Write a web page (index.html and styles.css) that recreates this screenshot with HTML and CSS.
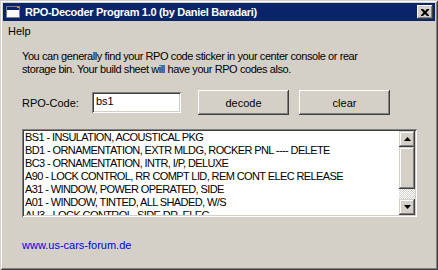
FILE: index.html
```html
<!DOCTYPE html>
<html lang="en">
<head>
    <meta charset="UTF-8">
    <title>RPO-Decoder Program 1.0</title>
    <link rel="stylesheet" href="styles.css">
</head>
<body>
    <div class="window">
        <div class="titlebar">
            <svg class="app-icon" width="16" height="16" viewBox="0 0 16 16">
                <rect x="1.5" y="2.5" width="13" height="11" fill="#fff" stroke="#808080"/>
                <rect x="2" y="3" width="12" height="3" fill="#0a246a"/>
                <rect x="12" y="3" width="2" height="1" fill="#ff8040"/>
            </svg>
            <span class="title">RPO-Decoder Program 1.0 (by Daniel Baradari)</span>
            <div class="close-btn">
                <svg width="8" height="7" viewBox="0 0 8 7">
                    <path d="M0 0h2l2 2 2-2h2v1l-2.5 2.5L8 6v1H6L4 5 2 7H0V6l2.5-2.5L0 1z" fill="#000"/>
                </svg>
            </div>
        </div>
        <div class="menubar">
            <span class="menu-item">Help</span>
        </div>
        <div class="client">
            <p class="intro">You can generally find your RPO code sticker in your center console or rear<br>storage bin. Your build sheet will have your RPO codes also.</p>
            <div class="code-row">
                <span class="code-label">RPO-Code:</span>
                <div class="textbox">bs1</div>
                <div class="btn decode-btn">decode</div>
                <div class="btn">clear</div>
            </div>
            <div class="listbox">
                <div class="list-items">
                    <div class="row">BS1 - INSULATION, ACOUSTICAL PKG</div>
                    <div class="row">BD1 - ORNAMENTATION, EXTR MLDG, ROCKER PNL ---- DELETE</div>
                    <div class="row">BC3 - ORNAMENTATION, INTR, I/P, DELUXE</div>
                    <div class="row">A90 - LOCK CONTROL, RR COMPT LID, REM CONT ELEC RELEASE</div>
                    <div class="row">A31 - WINDOW, POWER OPERATED, SIDE</div>
                    <div class="row">A01 - WINDOW, TINTED, ALL SHADED, W/S</div>
                    <div class="row">AU3 - LOCK CONTROL, SIDE DR, ELEC</div>
                </div>
                <div class="scrollbar">
                    <div class="sb-btn">
                        <svg width="7" height="4" viewBox="0 0 7 4"><path d="M3.5 0L7 4H0z" fill="#000"/></svg>
                    </div>
                    <div class="sb-thumb"></div>
                    <div class="sb-track"></div>
                    <div class="sb-btn">
                        <svg width="7" height="4" viewBox="0 0 7 4"><path d="M0 0h7L3.5 4z" fill="#000"/></svg>
                    </div>
                </div>
            </div>
            <a class="site-link" href="#">www.us-cars-forum.de</a>
        </div>
    </div>
</body>
</html>
```

FILE: styles.css
```css
* {
    margin: 0;
    padding: 0;
    box-sizing: border-box;
}
body {
    font-family: 'Liberation Sans', Arial, sans-serif;
    font-size: 11px;
    color: #000;
    background: #d4d0c8;
}
.window {
    width: 438px;
    height: 270px;
    padding: 3px;
    background: #d4d0c8;
    box-shadow: inset 1px 1px #d4d0c8, inset -1px -1px #404040,
                inset 2px 2px #fff, inset -2px -2px #808080;
    display: flex;
    flex-direction: column;
}

/* title bar */
.titlebar {
    height: 18px;
    background: #0a246a;
    display: flex;
    align-items: center;
    padding-left: 2px;
}
.app-icon {
    flex: none;
}
.title {
    margin-left: 4px;
    color: #fff;
    font-weight: bold;
    letter-spacing: -0.3px;
    flex: 1;
}
.close-btn {
    width: 16px;
    height: 14px;
    margin-right: 2px;
    background: #d4d0c8;
    box-shadow: inset -1px -1px #404040, inset 1px 1px #fff,
                inset -2px -2px #808080;
    display: flex;
    align-items: center;
    justify-content: center;
}

/* menu */
.menubar {
    height: 19px;
    display: flex;
    align-items: center;
    padding-left: 5px;
}

/* client area */
.client {
    flex: 1;
    padding: 10px 0 0 19px;
}
.intro {
    line-height: 13px;
    letter-spacing: -0.42px;
}
.code-row {
    display: flex;
    align-items: center;
    height: 25px;
    margin-top: 14px;
}
.code-label {
    width: 70px;
}
.textbox {
    width: 89px;
    height: 21px;
    background: #fff;
    padding: 3px 0 0 4px;
    box-shadow: inset 1px 1px #808080, inset -1px -1px #fff,
                inset 2px 2px #404040, inset -2px -2px #d4d0c8;
}
.btn {
    width: 91px;
    height: 25px;
    margin-left: 10px;
    display: flex;
    align-items: center;
    justify-content: center;
    box-shadow: inset -1px -1px #404040, inset 1px 1px #fff,
                inset -2px -2px #808080;
}
.decode-btn {
    margin-left: 17px;
}

/* list box */
.listbox {
    width: 395px;
    height: 88px;
    margin-top: 14px;
    padding: 2px;
    background: #fff;
    box-shadow: inset 1px 1px #808080, inset -1px -1px #fff,
                inset 2px 2px #404040, inset -2px -2px #d4d0c8;
    display: flex;
}
.list-items {
    flex: 1;
    overflow: hidden;
    padding-left: 1px;
    letter-spacing: -0.6px;
}
.row {
    height: 13px;
    line-height: 13px;
    white-space: nowrap;
}
.scrollbar {
    width: 16px;
    display: flex;
    flex-direction: column;
}
.sb-btn {
    height: 16px;
    background: #d4d0c8;
    box-shadow: inset -1px -1px #404040, inset 1px 1px #d4d0c8,
                inset -2px -2px #808080, inset 2px 2px #fff;
    display: flex;
    align-items: center;
    justify-content: center;
}
.sb-thumb {
    height: 42px;
    background: #d4d0c8;
    box-shadow: inset -1px -1px #404040, inset 1px 1px #d4d0c8,
                inset -2px -2px #808080, inset 2px 2px #fff;
}
.sb-track {
    flex: 1;
    background: repeating-conic-gradient(#d4d0c8 0 25%, #fff 0 50%) 0 0 / 2px 2px;
}

.site-link {
    display: inline-block;
    margin-top: 22px;
    color: #0000ee;
    text-decoration: none;
}
```
